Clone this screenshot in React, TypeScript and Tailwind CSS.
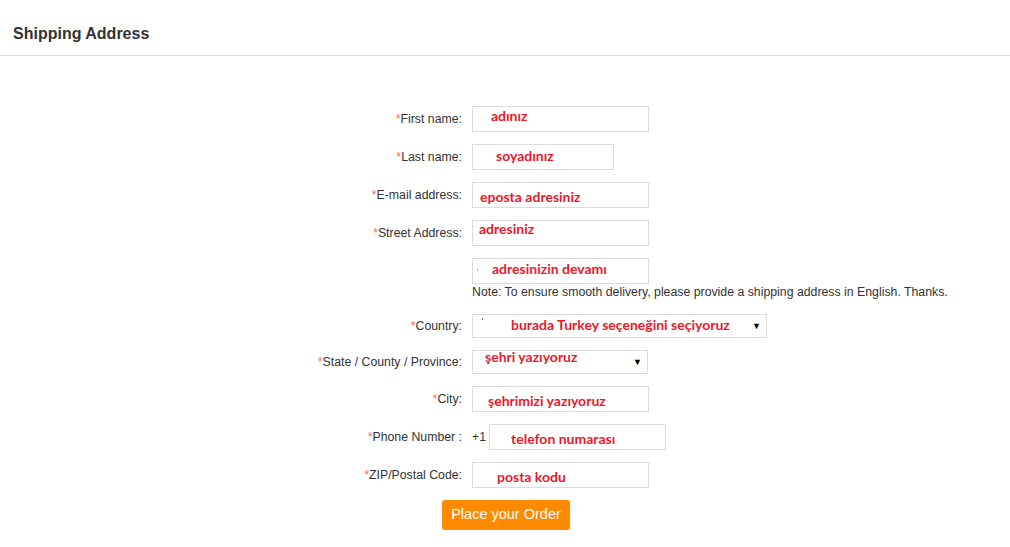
import type { ReactNode } from "react";

const labelFont = { fontFamily: '"Liberation Sans", Arial, sans-serif' };
const noteFont = { fontFamily: 'Lato, "Open Sans", sans-serif' };

function Label({ children }: { children: ReactNode }) {
  return (
    <div className="w-[462px] shrink-0 text-right text-[12.3px] text-[#333]">
      <span className="text-[#ff6a3d]">*</span>
      {children}
    </div>
  );
}

function Field({
  width,
  pad,
  height = "h-[26px]",
  arrow = false,
  children,
}: {
  width: string;
  pad: string;
  height?: string;
  arrow?: boolean;
  children?: ReactNode;
}) {
  return (
    <div
      className={`relative flex ${width} ${height} items-center border border-[#dcdcdc] bg-white`}
    >
      <span
        className={`${pad} text-[14px] font-bold leading-none text-[#e8192c]`}
        style={noteFont}
      >
        {children}
      </span>
      {arrow ? (
        <span className="absolute right-[5px] top-[7px] text-[9px] leading-none text-black">
          ▼
        </span>
      ) : null}
    </div>
  );
}

function Row({
  label,
  children,
  className = "",
}: {
  label?: string;
  children: ReactNode;
  className?: string;
}) {
  return (
    <div className={`flex items-center ${className}`}>
      {label ? <Label>{label}</Label> : <div className="w-[462px] shrink-0" />}
      <div className="ml-[10px] flex items-center">{children}</div>
    </div>
  );
}

export default function App() {
  return (
    <div className="h-[547px] w-[1010px] bg-white" style={labelFont}>
      <div className="h-[56px] border-b border-[#dedede] pl-[13px] pt-[24px]">
        <h2 className="text-[16px] font-bold leading-[20px] text-[#333]">Shipping Address</h2>
      </div>

      <div className="flex flex-col pt-[50px]">
        <Row label="First name:">
          <Field width="w-[177px]" pad="pl-[18px] pb-[7px]">
            adınız
          </Field>
        </Row>
        <Row label="Last name:" className="mt-[12px]">
          <Field width="w-[142px]" pad="pl-[23px] pb-[3px]">
            soyadınız
          </Field>
        </Row>
        <Row label="E-mail address:" className="mt-[12px]">
          <Field width="w-[177px]" pad="pl-[7px] pt-[4px]">
            eposta adresiniz
          </Field>
        </Row>
        <Row label="Street Address:" className="mt-[12px]">
          <Field width="w-[177px]" pad="pl-[6px] pb-[9px]">
            adresiniz
          </Field>
        </Row>
        <Row className="mt-[12px]">
          <Field width="w-[177px]" pad="pl-[4px] pb-[5px]">
            <span className="mr-[14px] inline-block h-[2px] w-[1px] bg-[#e9a27a] align-middle" />
            adresinizin devamı
          </Field>
        </Row>
        <Row className="mt-[1px]">
          <p className="text-[12.3px] leading-[15px] text-[#333]">
            Note: To ensure smooth delivery, please provide a shipping address in English. Thanks.
          </p>
        </Row>
        <Row label="Country:" className="mt-[14px]">
          <Field width="w-[295px]" height="h-[24px]" pad="pl-[9px] pb-[3px]" arrow>
            <span className="mr-[28px] inline-block h-[2px] w-[1px] bg-[#777] align-top" />
            burada Turkey seçeneğini seçiyoruz
          </Field>
        </Row>
        <Row label="State / County / Province:" className="mt-[12px]">
          <Field width="w-[176px]" height="h-[24px]" pad="pl-[12px] pb-[11px]" arrow>
            şehri yazıyoruz
          </Field>
        </Row>
        <Row label="City:" className="mt-[12px]">
          <Field width="w-[177px]" pad="pl-[15px] pt-[3px]">
            şehrimizi yazıyoruz
          </Field>
        </Row>
        <Row label="Phone Number :" className="mt-[12px]">
          <span className="mr-[3px] text-[12.3px] text-[#333]">+1</span>
          <Field width="w-[177px]" pad="pl-[21px] pt-[3px]">
            telefon numarası
          </Field>
        </Row>
        <Row label="ZIP/Postal Code:" className="mt-[12px]">
          <Field width="w-[177px]" pad="pl-[24px] pt-[3px]">
            posta kodu
          </Field>
        </Row>

        <div className="mt-[12px] flex justify-center pl-[2px]">
          <button className="h-[30px] w-[128px] rounded-[3px] bg-[#ff8a00] text-[14.5px] text-white">
            Place your Order
          </button>
        </div>
      </div>
    </div>
  );
}
